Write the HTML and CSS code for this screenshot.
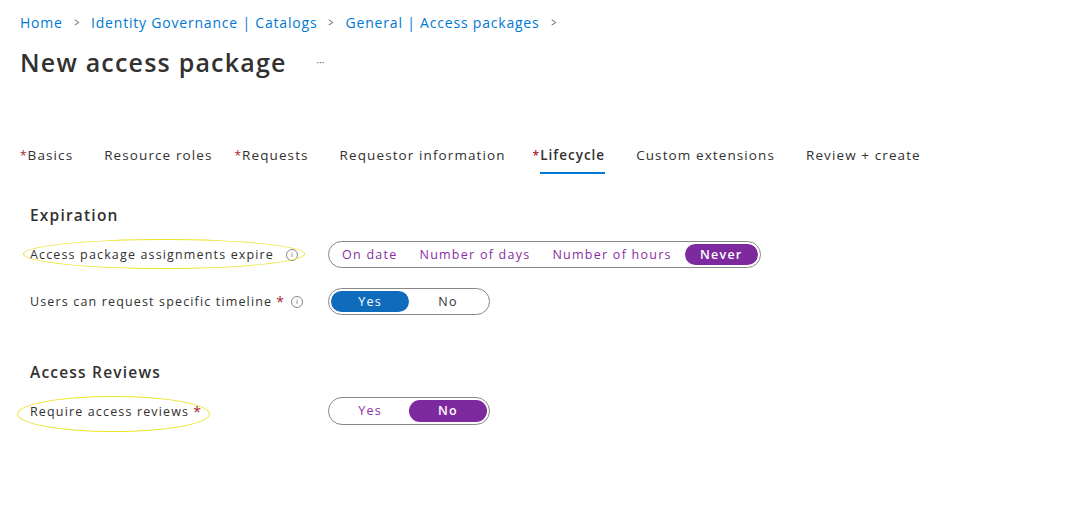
FILE: index.html
```html
<!DOCTYPE html>
<html>
<head>
<meta charset="utf-8">
<link rel="stylesheet" href="styles.css">
</head>
<body>
<div class="page">
  <nav class="crumbs">
    <a>Home</a><span class="sep">&gt;</span><a>Identity Governance | Catalogs</a><span class="sep">&gt;</span><a>General | Access packages</a><span class="sep">&gt;</span>
  </nav>
  <div class="title-row">
    <h1>New access package</h1>
    <span class="more">···</span>
  </div>
  <div class="tabs">
    <div class="tab"><span class="req">*</span>Basics</div>
    <div class="tab">Resource roles</div>
    <div class="tab hang"><span class="req">*</span>Requests</div>
    <div class="tab">Requestor information</div>
    <div class="tab hang-sm active"><span class="req">*</span><span class="tab-label">Lifecycle</span></div>
    <div class="tab">Custom extensions</div>
    <div class="tab">Review + create</div>
  </div>
  <section class="content">
    <h2 class="sec-expiration">Expiration</h2>
    <div class="row row-1">
      <div class="label"><span class="mark mark-1"></span>Access package assignments expire <span class="info">i</span></div>
      <div class="seg">
        <span class="opt purple">On date</span>
        <span class="opt purple">Number of days</span>
        <span class="opt purple">Number of hours</span>
        <span class="opt sel-purple pill-never">Never</span>
      </div>
    </div>
    <div class="row row-2">
      <div class="label">Users can request specific timeline <span class="star">*</span> <span class="info info-near">i</span></div>
      <div class="seg">
        <span class="opt sel-blue pill-wide">Yes</span>
        <span class="opt dark pill-wide">No</span>
      </div>
    </div>
    <h2 class="sec-reviews">Access Reviews</h2>
    <div class="row row-3">
      <div class="label"><span class="mark mark-2"></span>Require access reviews <span class="star">*</span></div>
      <div class="seg">
        <span class="opt purple pill-wide">Yes</span>
        <span class="opt sel-purple pill-wide">No</span>
      </div>
    </div>
  </section>
</div>
</body>
</html>
```

FILE: styles.css
```css
* { box-sizing: border-box; }
html, body { margin: 0; padding: 0; background: #fff; }
body {
  font-family: "Open Sans", "Noto Sans", "Liberation Sans", sans-serif;
  color: #323130;
  width: 1080px;
  height: 528px;
  overflow: hidden;
}
.page { padding: 12px 0 0 20px; }

.crumbs {
  display: flex;
  align-items: center;
  height: 20px;
  font-size: 14px;
  letter-spacing: 0.8px;
  color: #0078d4;
}
.crumbs a { color: #0078d4; }
.crumbs .sep {
  color: #605e5c;
  margin: 0 10px 0 10px;
  font-size: 13px;
  transform: scaleX(0.7);
}

.title-row {
  display: flex;
  align-items: center;
  margin-top: 14px;
  height: 32px;
}
h1 {
  margin: 0;
  font-size: 25px;
  font-weight: 600;
  letter-spacing: 1.2px;
  color: #323130;
  line-height: 32px;
}
.more {
  margin-left: 30px;
  font-size: 10px;
  color: #605e5c;
}

.tabs {
  display: flex;
  gap: 31px;
  margin-top: 59px;
  font-size: 13.5px;
  letter-spacing: 1.1px;
}
.tab {
  padding: 8px 0 7px;
  line-height: 20px;
  border-bottom: 2px solid transparent;
  color: #323130;
}
.tab.hang { margin-left: -9px; }
.tab.hang-sm { margin-left: -4px; }
.tab .req { color: #a4262c; margin-right: 1px; font-size: 12px; letter-spacing: 0; }
.tab.active { font-weight: 600; letter-spacing: 1px; }
.tab.active .tab-label {
  display: inline-block;
  border-bottom: 2px solid #0078d4;
  padding-bottom: 7px;
  margin-bottom: -9px;
}

.content { padding-left: 10px; }
h2 {
  margin: 0;
  font-size: 15.5px;
  font-weight: 600;
  letter-spacing: 1.2px;
  line-height: 22px;
  color: #323130;
}
.sec-expiration { margin-top: 29px; }
.sec-reviews { margin-top: 46px; }

.row {
  display: flex;
  align-items: center;
}
.row-1 { margin-top: 15px; height: 27px; }
.row-2 { margin-top: 20px; height: 27px; }
.row-3 { margin-top: 14px; height: 28px; }

.label {
  position: relative;
  width: 298px;
  font-size: 12.5px;
  letter-spacing: 1.15px;
  color: #323130;
  display: flex;
  align-items: center;
}
.star { color: #a4262c; margin-left: 4px; font-size: 14px; letter-spacing: 0; }
.info {
  display: inline-flex;
  align-items: center;
  justify-content: center;
  width: 12px;
  height: 12px;
  border: 1px solid #8a8886;
  border-radius: 50%;
  font-size: 7px;
  letter-spacing: 0;
  color: #605e5c;
  margin-left: 12px;
  font-family: "DejaVu Sans", sans-serif;
}
.info.info-near { margin-left: 7px; }

.mark {
  position: absolute;
  border: 1.5px solid #ece32a;
  border-radius: 50%;
  pointer-events: none;
}
.mark-1 { left: -7px; top: -7px; width: 282px; height: 30px; }
.mark-2 { left: -13px; top: -6px; width: 193px; height: 36px; }

.seg {
  display: inline-flex;
  align-items: center;
  height: 100%;
  border: 1.5px solid #8a8886;
  border-radius: 14px;
  padding: 0 2px;
  font-size: 12.5px;
  letter-spacing: 1.25px;
}
.opt {
  padding: 0 11px;
  height: 21px;
  line-height: 21px;
  border-radius: 11px;
  white-space: nowrap;
}
.purple { color: #8a2da5; }
.dark { color: #323130; }
.sel-purple { background: #7d2a9e; color: #fff; font-weight: 600; }
.sel-blue { background: #0f6cbd; color: #fff; }
.pill-never { width: 73px; text-align: center; margin-left: 2px; }
.pill-wide { width: 78px; text-align: center; }
.row-3 .opt { height: 22px; line-height: 22px; }
```
